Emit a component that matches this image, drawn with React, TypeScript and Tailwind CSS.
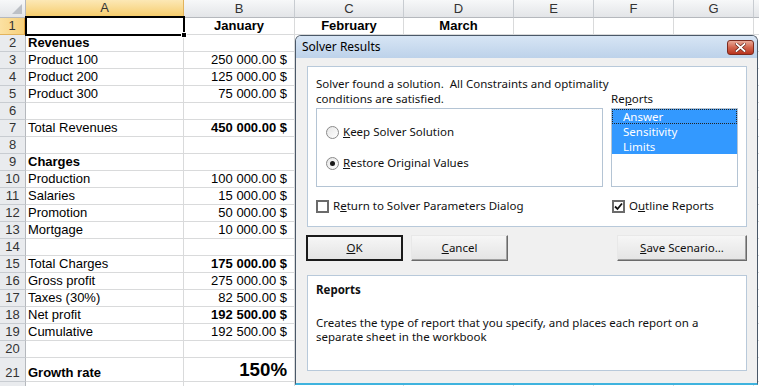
import React from 'react';

type Row = {
  n: number;
  a?: string;
  aB?: boolean;
  b?: string;
  bB?: boolean;
  c?: string;
  d?: string;
  tall?: boolean;
  big?: boolean;
  hideNum?: boolean;
};

const rows: Row[] = [
  { n: 1, b: 'January', c: 'February', d: 'March' },
  { n: 2, a: 'Revenues', aB: true },
  { n: 3, a: 'Product 100', b: '250 000.00 $' },
  { n: 4, a: 'Product 200', b: '125 000.00 $' },
  { n: 5, a: 'Product 300', b: '75 000.00 $' },
  { n: 6 },
  { n: 7, a: 'Total Revenues', b: '450 000.00 $', bB: true },
  { n: 8 },
  { n: 9, a: 'Charges', aB: true },
  { n: 10, a: 'Production', b: '100 000.00 $' },
  { n: 11, a: 'Salaries', b: '15 000.00 $' },
  { n: 12, a: 'Promotion', b: '50 000.00 $' },
  { n: 13, a: 'Mortgage', b: '10 000.00 $' },
  { n: 14 },
  { n: 15, a: 'Total Charges', b: '175 000.00 $', bB: true },
  { n: 16, a: 'Gross profit', b: '275 000.00 $' },
  { n: 17, a: 'Taxes (30%)', b: '82 500.00 $' },
  { n: 18, a: 'Net profit', b: '192 500.00 $', bB: true },
  { n: 19, a: 'Cumulative', b: '192 500.00 $' },
  { n: 20 },
  { n: 21, a: 'Growth rate', aB: true, b: '150%', bB: true, tall: true, big: true },
  { n: 22, hideNum: true },
];

const cols = [
  { k: 'A', w: 'w-[158px]' },
  { k: 'B', w: 'w-[111px]' },
  { k: 'C', w: 'w-[109px]' },
  { k: 'D', w: 'w-[110px]' },
  { k: 'E', w: 'w-[80px]' },
  { k: 'F', w: 'w-[80px]' },
  { k: 'G', w: 'w-[80px]' },
  { k: '', w: 'w-[40px]' },
];

const grid = 'border-r border-b border-[#d9dadb]';

function ColHeaders() {
  return (
    <div className="flex h-[18px]">
      <div className="relative w-[26px] shrink-0 border-r border-b border-[#b5b8bd] bg-gradient-to-b from-[#f7f8f9] to-[#e3e5e8]">
        <div className="absolute right-[3px] bottom-[3px] w-0 h-0 border-l-[10px] border-l-transparent border-b-[10px] border-b-[#bcc0c6]" />
      </div>
      {cols.map((c) =>
        c.k === 'A' ? (
          <div
            key={c.k}
            className={`${c.w} shrink-0 flex items-center justify-center border-r border-b-2 border-r-[#e2b35c] border-b-[#e3a23c] bg-gradient-to-b from-[#fce8b5] to-[#f6cd6c] text-[#333] text-[13px]`}
          >
            {c.k}
          </div>
        ) : (
          <div
            key={c.k || 'x'}
            className={`${c.w} shrink-0 flex items-center justify-center border-r border-b border-r-[#c8ccd1] border-b-[#b5b8bd] bg-gradient-to-b from-[#f7f8f9] to-[#e3e5e8] text-[#333] text-[13px]`}
          >
            {c.k}
          </div>
        )
      )}
    </div>
  );
}

function SheetRow({ r }: { r: Row }) {
  const h = r.tall ? 'h-[24px]' : 'h-[17px]';
  const sel = r.n === 1;
  return (
    <div className={`flex ${h}`}>
      <div
        className={`w-[26px] shrink-0 flex items-end justify-center text-[13px] leading-[15px] pb-[1px] border-b ${
          sel
            ? 'border-r-2 border-r-[#e3a23c] border-b-[#e2b35c] bg-gradient-to-r from-[#fbe1a2] to-[#f7d07a] text-[#333]'
            : 'border-r border-r-[#b5b8bd] border-b-[#c8ccd1] bg-[#e9ebee] text-[#333]'
        }`}
      >
        {r.hideNum ? '' : r.n}
      </div>
      <div className={`w-[158px] shrink-0 ${grid} flex items-end pl-[2px] pb-[1px] text-[13px] leading-[15px] text-black whitespace-nowrap ${r.aB ? 'font-bold' : ''}`}>
        {r.a}
      </div>
      <div
        className={`w-[111px] shrink-0 ${grid} flex items-end ${r.n === 1 ? 'justify-center' : 'justify-end pr-[7px]'} ${
          r.big ? 'text-[18.7px] leading-[22px] pb-0' : 'text-[13px] leading-[15px] pb-[1px]'
        } text-black whitespace-nowrap ${r.bB || r.n === 1 ? 'font-bold' : ''}`}
      >
        {r.b}
      </div>
      <div className={`w-[109px] shrink-0 ${grid} flex items-end justify-center pb-[1px] text-[13px] leading-[15px] font-bold`}>
        {r.c}
      </div>
      <div className={`w-[110px] shrink-0 ${grid} flex items-end justify-center pb-[1px] text-[13px] leading-[15px] font-bold`}>
        {r.d}
      </div>
      <div className={`w-[80px] shrink-0 ${grid}`} />
      <div className={`w-[80px] shrink-0 ${grid}`} />
      <div className={`w-[80px] shrink-0 ${grid}`} />
      <div className={`w-[40px] shrink-0 ${grid}`} />
    </div>
  );
}

function Radio({ checked }: { checked?: boolean }) {
  return (
    <div className="w-[13px] h-[13px] rounded-full border border-[#8a8a8a] bg-gradient-to-br from-[#e6e6e6] to-[#ffffff] flex items-center justify-center shrink-0">
      {checked && <div className="w-[5px] h-[5px] rounded-full bg-[#1a1a1a]" />}
    </div>
  );
}

function Check({ checked }: { checked?: boolean }) {
  return (
    <div className="w-[13px] h-[13px] border-2 border-[#6b6b6b] bg-white flex items-center justify-center shrink-0">
      {checked && (
        <svg width="9" height="9" viewBox="0 0 9 9">
          <path d="M1 4.5 L3.5 7 L8 1.5" stroke="#111" strokeWidth="1.8" fill="none" />
        </svg>
      )}
    </div>
  );
}

function Btn({ children, def, w }: { children: React.ReactNode; def?: boolean; w: string }) {
  return (
    <div
      className={`${w} h-[26px] flex items-center justify-center ${
        def ? 'border-2 border-[#1a1a1a]' : 'border border-t-[#e8e8e8] border-l-[#e8e8e8] border-r-[#6a6a6a] border-b-[#6a6a6a] shadow-[inset_-1px_-1px_0_#a0a0a0]'
      } bg-gradient-to-b from-[#f6f6f6] to-[#e4e4e4] text-[#111]`}
    >
      {children}
    </div>
  );
}

function Dialog() {
  return (
    <div className="absolute left-[295px] top-[35px] w-[463px] h-[350px] rounded-t-[6px] border border-[#4a5868] border-b-2 border-b-[#3fb3de] bg-[#f0f0f0] font-['Noto_Sans',sans-serif] text-[11.5px] text-[#111] flex flex-col">
      <div className="relative h-[22px] shrink-0 rounded-t-[5px] bg-gradient-to-b from-[#d7e5f5] to-[#bdd2ea] flex items-center pl-[6px] text-[12px] text-black">
        Solver Results
        <div className="absolute right-[3px] top-[4px] w-[27px] h-[15px] rounded-[3px] border border-[#7c2b1f] bg-gradient-to-b from-[#e8a998] via-[#d2644d] to-[#b8331d] flex items-center justify-center">
          <svg width="11" height="9" viewBox="0 0 11 9">
            <path d="M1.5 1 L9.5 8 M9.5 1 L1.5 8" stroke="#5a1a10" strokeWidth="3" strokeLinecap="square" />
            <path d="M1.5 1 L9.5 8 M9.5 1 L1.5 8" stroke="#ffffff" strokeWidth="1.8" strokeLinecap="square" />
          </svg>
        </div>
      </div>
      <div className="pl-[11px] pr-[10px] pt-[8px] flex flex-col">
        <div className="h-[161px] border border-[#b8c9da] bg-white pl-[8px] pr-[8px] pt-[9px] flex flex-col">
          <div className="leading-[15px] whitespace-nowrap">Solver found a solution.&nbsp; All Constraints and optimality</div>
          <div className="flex">
            <div className="w-[295px] shrink-0 flex flex-col">
              <div className="leading-[15px] whitespace-nowrap">conditions are satisfied.</div>
              <div className="mt-[2px] h-[79px] w-[287px] border border-[#b4c4d4] bg-white flex flex-col pl-[9px]">
                <div className="flex items-center gap-[4px] mt-[15px] h-[16px]">
                  <Radio />
                  <span className="leading-[16px]"><u>K</u>eep Solver Solution</span>
                </div>
                <div className="flex items-center gap-[4px] mt-[15px] h-[16px]">
                  <Radio checked />
                  <span className="leading-[16px]"><u>R</u>estore Original Values</span>
                </div>
              </div>
            </div>
            <div className="flex flex-col">
              <div className="leading-[15px]">Re<u>p</u>orts</div>
              <div className="mt-[2px] h-[79px] w-[127px] border border-[#b4c4d4] bg-white flex flex-col">
                <div className="h-[15px] bg-[#3399ff] text-white pl-[10px] leading-[13px] border border-dotted border-[#222]">Answer</div>
                <div className="h-[15px] bg-[#3399ff] text-white pl-[11px] leading-[15px]">Sensitivity</div>
                <div className="h-[15px] bg-[#3399ff] text-white pl-[11px] leading-[15px]">Limits</div>
              </div>
            </div>
          </div>
          <div className="flex mt-[11px] h-[16px]">
            <div className="w-[295px] shrink-0 flex items-center gap-[4px]">
              <Check />
              <span className="leading-[16px]">R<u>e</u>turn to Solver Parameters Dialog</span>
            </div>
            <div className="flex items-center gap-[4px] pl-[1px]">
              <Check checked />
              <span className="leading-[16px]">O<u>u</u>tline Reports</span>
            </div>
          </div>
        </div>
        <div className="flex mt-[8px]">
          <div className="-ml-px flex gap-[8px]">
            <Btn def w="w-[97px]"><span><u>O</u>K</span></Btn>
            <Btn w="w-[97px]"><span><u>C</u>ancel</span></Btn>
          </div>
          <div className="ml-auto">
            <Btn w="w-[130px]"><span><u>S</u>ave Scenario...</span></Btn>
          </div>
        </div>
        <div className="mt-[14px] h-[96px] border border-[#b8c9da] bg-white pl-[8px] pt-[6px]">
          <div className="font-bold leading-[15px]">Reports</div>
          <div className="mt-[19px] leading-[14px]">
            Creates the type of report that you specify, and places each report on a
            <br />
            separate sheet in the workbook
          </div>
        </div>
      </div>
    </div>
  );
}

export default function App() {
  return (
    <div className="relative w-[759px] h-[386px] overflow-hidden bg-white font-['Liberation_Sans',Arial,sans-serif]">
      <ColHeaders />
      {rows.map((r) => (
        <SheetRow key={r.n} r={r} />
      ))}
      <div className="absolute left-[25px] top-[16px] w-[160px] h-[20px] border-2 border-black pointer-events-none" />
      <div className="absolute left-[181px] top-[32px] w-[6px] h-[6px] bg-black border border-white" />
      <Dialog />
    </div>
  );
}
